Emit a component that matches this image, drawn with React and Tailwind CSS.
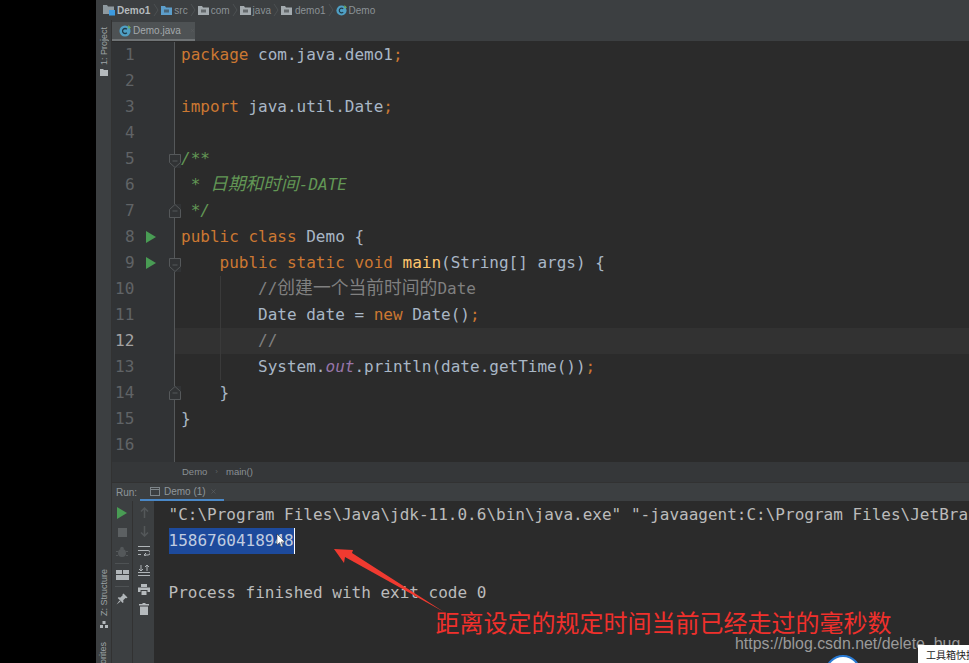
import React from "react";
import { X } from "lucide-react";

const mono = "font-['DejaVu_Sans_Mono','Noto_Sans_CJK_SC',monospace]";
const K = ({ children }) => <span className="text-[#cc7832]">{children}</span>;
const C = ({ children }) => <span className="text-[#629755] italic">{children}</span>;
const G = ({ children }) => <span className="text-[#808080]">{children}</span>;
const H = ({ children }) => <span className="text-[17.800px] leading-none">{children}</span>;

const lines = [
  [<><K>package</K> com.java.demo1<K>;</K></>],
  [""],
  [<><K>import</K> java.util.Date<K>;</K></>],
  [""],
  [<C>/**</C>, "down"],
  [<C>&nbsp;* <H>日期和时间</H>-DATE</C>],
  [<C>&nbsp;*/</C>, "up"],
  [<><K>public class</K> Demo {"{"}</>, null, true],
  [<>&nbsp;&nbsp;&nbsp;&nbsp;<K>public static void</K> <span className="text-[#ffc66d]">main</span>(String[] args) {"{"}</>, "down", true],
  [<>&nbsp;&nbsp;&nbsp;&nbsp;&nbsp;&nbsp;&nbsp;&nbsp;<G>//<H>创建一个当前时间的</H>Date</G></>],
  [<>&nbsp;&nbsp;&nbsp;&nbsp;&nbsp;&nbsp;&nbsp;&nbsp;Date date = <K>new</K> Date()<K>;</K></>],
  [<>&nbsp;&nbsp;&nbsp;&nbsp;&nbsp;&nbsp;&nbsp;&nbsp;<G>//</G></>],
  [<>&nbsp;&nbsp;&nbsp;&nbsp;&nbsp;&nbsp;&nbsp;&nbsp;System.<span className="text-[#9876aa] italic">out</span>.println(date.getTime())<K>;</K></>],
  [<>&nbsp;&nbsp;&nbsp;&nbsp;{"}"}</>, "up"],
  ["}"],
  [""],
];

function Fold({ dir }) {
  return (
    <svg width="12" height="14" viewBox="0 0 12 14" className={`absolute left-[57px] bg-[#313335] ${dir === "down" ? "top-[8px]" : "top-[6px]"}`} fill="none" stroke="#55585a">
      {dir === "down" ? <path d="M.5.5h11v8l-5.500 5-5.500-5z" /> : <path d="M.5 13.500h11v-8l-5.500-5-5.500 5z" />}
      <path d="M3.500 7h5" />
    </svg>
  );
}

const Sep = () => (
  <svg width="10" height="14" viewBox="0 0 10 14" fill="none" stroke="#4c5052" className="shrink-0"><path d="M3 1l4 6-4 6" /></svg>
);
const Folder = ({ c = "#a4abaf" }) => (
  <svg width="11" height="9" viewBox="0 0 11 9" className="shrink-0"><path d="M0 0h4l1 1.500h6V9H0z" fill={c} /><rect x="3" y="3.500" width="5" height="3" fill="#3c3f41" opacity=".6" /></svg>
);
const ClassIcon = ({ s = 13 }) => (
  <svg width={s} height={s} viewBox="0 0 13 13" className="shrink-0">
    <circle cx="6.500" cy="6.500" r="6" fill="#4f9fc4" />
    <path d="M8.500 4.600A2.700 2.700 0 1 0 8.500 8.400" stroke="#1f3a48" strokeWidth="1.400" fill="none" />
    <path d="M10 0l3 3-3 1z" fill="#6fae5a" />
  </svg>
);
const Crumb = ({ icon, children, gap = "gap-[2px]" }) => (
  <span className={`flex items-center ${gap}`}>
    {icon}
    <span className="text-[#8b9296]">{children}</span>
  </span>
);

const Row = ({ h = "h-[19.500px]", children }) => <div className={`${h} flex items-center justify-center shrink-0`}>{children}</div>;

export default function App() {
  return (
    <div className="relative flex w-[969px] h-[663px] overflow-hidden bg-black font-['Liberation_Sans','Noto_Sans_CJK_SC',sans-serif]">
      <div className="w-[96px] shrink-0 bg-black" />
      <div className="flex-1 flex flex-col min-w-0 bg-[#2b2b2b]">
        <div className="h-[20px] shrink-0 flex items-center pl-[7px] bg-[#3c3f41] text-[10px]">
          <span className="flex items-center gap-[1px]">
            <svg width="13" height="12" viewBox="0 0 13 12" className="shrink-0"><path d="M0 1h4l1 1.500h6V10H0z" fill="#8f9aa0" /><rect x="6" y="6" width="6" height="5.500" fill="#3d9be0" /></svg>
            <span className="font-bold text-[#b4babd]">Demo1</span>
          </span>
          <span className="w-[1px]" /><Sep />
          <Crumb icon={<Folder c="#5c9ecb" />}>src</Crumb>
          <Sep />
          <Crumb icon={<Folder />}>com</Crumb>
          <Sep />
          <Crumb icon={<Folder />}>java</Crumb>
          <Sep />
          <Crumb icon={<Folder />} gap="gap-[3px]">demo1</Crumb>
          <Sep />
          <Crumb icon={<ClassIcon s={11} />}>Demo</Crumb>
        </div>

        <div className="flex-1 flex min-h-0">
          <div className="w-[16px] shrink-0 bg-[#3c3f41] border-r border-[#323232] flex flex-col items-center pt-[7px] relative">
            <span className="[writing-mode:vertical-rl] rotate-180 text-[9px] leading-[12px] text-[#9ea3a6]">1: Project</span>
            <svg width="8" height="7" viewBox="0 0 8 7" className="mt-[4px]"><path d="M0 0h3l1 1h4v6H0z" fill="#b5babd" /></svg>
            <div className="absolute left-0 top-[549px] flex flex-col items-center w-[15px]">
              <span className="[writing-mode:vertical-rl] rotate-180 text-[9px] leading-[12px] text-[#9ea3a6]">Z: Structure</span>
              <svg width="8" height="7" viewBox="0 0 8 7" className="mt-[5px]"><path d="M0 4h3v3H0zM5 4h3v3H5zM2.500 0h3v3h-3z" fill="#b5babd" /></svg>
            </div>
            <span className="absolute top-[622px] left-[1px] [writing-mode:vertical-rl] rotate-180 text-[9px] leading-[12px] text-[#9ea3a6]">Favorites</span>
          </div>

          <div className="flex-1 flex flex-col min-w-0">
            <div className="h-[21px] shrink-0 flex items-end bg-[#3c3f41]">
              <div className="w-[83px] h-[19px] flex items-center pl-[7px] gap-[2px] bg-[#4e5254] border-b-[2px] border-[#6f7375] text-[10px] text-[#a4a9ac]">
                <ClassIcon s={12} />
                <span>Demo.java</span>
                <X size={7} className="ml-[7px] text-[#5f6365]" />
              </div>
            </div>

            <div className={`h-[421px] shrink-0 flex flex-col pt-[1px] text-[16px] leading-[26px] text-[#a9b7c6] ${mono}`}>
              {lines.map(([code, fold, run], i) => (
                <div key={i} className={`relative flex h-[26px] shrink-0 ${i === 11 ? "bg-[#323232]" : ""}`}>
                  <div className="relative w-[63px] shrink-0 h-full bg-[#313335] border-r border-[#55585a] text-right text-[#606366]">
                    <span className={`absolute top-0 ${i >= 9 ? "left-[3px]" : "left-[13px]"} ${i === 11 ? "text-[#a4a3a3]" : ""}`}>{i + 1}</span>
                    {run && (
                      <svg width="10" height="12" viewBox="0 0 10 12" className="absolute left-[34px] top-[7px]"><path d="M0 0l10 6-10 6z" fill="#499c54" /></svg>
                    )}
                    {fold && <Fold dir={fold} />}
                  </div>
                  <div className="pl-[6px] whitespace-pre">{code}</div>
                  {i >= 9 && i <= 12 && <div className="absolute left-[108px] top-0 bottom-0 w-px bg-[#3a3a3a]" />}
                </div>
              ))}
              <div className="flex-1 flex">
                <div className="w-[63px] shrink-0 bg-[#313335] border-r border-[#55585a]" />
              </div>
            </div>

            <div className="h-[20px] shrink-0 flex items-center pl-[70px] gap-[8px] bg-[#353739] text-[9.500px] text-[#8a9094]">
              <span>Demo</span>
              <span className="text-[#5c6062] text-[8px]">›</span>
              <span>main()</span>
            </div>

            <div className="h-[19px] shrink-0 flex items-end bg-[#3c3f41] border-t border-[#323232] text-[10px] text-[#8f969a]">
              <span className="self-center pl-[4px] w-[28px]">Run:</span>
              <div className="w-[84px] h-[18px] flex items-center pl-[10px] gap-[4px] border-b-[2px] border-[#4a88c7]">
                <svg width="10" height="9" viewBox="0 0 10 9" fill="none" stroke="#7e8589"><rect x=".5" y=".5" width="9" height="8" /><path d="M.5 2.500h9" /></svg>
                <span>Demo (1)</span>
                <X size={7} className="text-[#5f6365]" />
              </div>
            </div>

            <div className="flex-1 flex min-h-0">
              <div className="w-[21px] shrink-0 bg-[#3c3f41] border-r border-[#323232] flex flex-col pt-[2px]">
                <Row><svg width="10" height="12" viewBox="0 0 10 12"><path d="M0 0l10 6-10 6z" fill="#499c54" /></svg></Row>
                <Row><div className="w-[9px] h-[9px] bg-[#5c6062]" /></Row>
                <Row>
                  <svg width="12" height="12" viewBox="0 0 12 12" fill="#54585a"><circle cx="6" cy="7" r="4" /><circle cx="6" cy="2.500" r="1.800" /><path d="M0 5h2v1H0zM10 5h2v1h-2zM0 9h2v1H0zM10 9h2v1h-2z" /></svg>
                </Row>
                <div className="h-px mt-[1.500px] mx-[3px] bg-[#4e5254] shrink-0" />
                <Row h="h-[22px]"><svg width="13" height="10" viewBox="0 0 13 10" fill="#b0b5b8"><path d="M0 0h6v4H0zM7 0h6v4H7zM0 5h13v5H0z" /></svg></Row>
                <div className="h-px mx-[3px] bg-[#4e5254] shrink-0" />
                <Row h="h-[24px]">
                  <svg width="12" height="12" viewBox="0 0 12 12" fill="#b0b5b8">
                    <path d="M7.500 0.500l4 4-1 .7-1-.2-2.300 2.300.3 2-.8.7-5-5 .7-.8 2 .3 2.300-2.300-.2-1z" />
                    <path d="M3.500 7.500L0.500 11.500l4-3z" />
                  </svg>
                </Row>
              </div>
              <div className="w-[21px] shrink-0 bg-[#3c3f41] flex flex-col pt-[2px] pl-[1px]">
                <Row h="h-[19.200px]"><svg width="9" height="11" viewBox="0 0 9 11" fill="none" stroke="#54585a" strokeWidth="1.500"><path d="M4.500 11V1M1 4.500l3.500-3.500 3.500 3.500" /></svg></Row>
                <Row h="h-[19.200px]"><svg width="9" height="11" viewBox="0 0 9 11" fill="none" stroke="#54585a" strokeWidth="1.500"><path d="M4.500 0v10M1 6.500l3.500 3.500 3.500-3.500" /></svg></Row>
                <Row h="h-[19.200px]"><svg width="12" height="10" viewBox="0 0 12 10" fill="none" stroke="#b0b5b8"><path d="M0 .5h12M0 4.500h10a2 2 0 0 1 0 4.500H6.500M8 7l-2 2 2 1M0 8.500h3" /></svg></Row>
                <Row h="h-[19.200px]"><svg width="12" height="11" viewBox="0 0 12 11" fill="none" stroke="#b0b5b8"><path d="M0 10.500h12M0 7.500h12M3 0v6M1 4l2 2 2-2M9 6V0M7 2l2-2 2 2" /></svg></Row>
                <Row h="h-[19.200px]"><svg width="12" height="11" viewBox="0 0 12 11" fill="#b5babd"><path d="M3 0h6v3H3zM0 3.500h12V8H9.500V6h-7v2H0zM3.500 7h5v4h-5z" /></svg></Row>
                <Row h="h-[19.200px]"><svg width="10" height="12" viewBox="0 0 10 12" fill="#b5babd"><path d="M0 1h3.500V0h3v1H10v1.500H0zM1 3.500h8V12H1z" /></svg></Row>
              </div>
              <div className={`pl-[14.500px] pt-[1px] flex-1 min-w-0 overflow-hidden bg-[#2b2b2b] text-[16px] leading-[26px] text-[#bbbbbb] whitespace-pre ${mono}`}>
                <div>"C:\Program Files\Java\jdk-11.0.6\bin\java.exe" "-javaagent:C:\Program Files\JetBrains</div>
                <div className="h-[26px]">
                  <span className="inline-block bg-[#1d4a9c] border-r border-white leading-[26px] text-[#c0cce0]">1586760418948</span>
                </div>
                <div className="h-[26px]" />
                <div>Process finished with exit code 0</div>
              </div>
            </div>
          </div>
        </div>
      </div>

      <svg className="absolute left-[276px] top-[534px] pointer-events-none" width="10" height="14" viewBox="0 0 10 14">
        <path d="M1 0v11l2.500-2.500L5.500 13l1.500-.7L5 8h4z" fill="#fff" stroke="#2b2b2b" strokeWidth=".5" />
      </svg>
      <svg className="absolute left-[330px] top-[544px] pointer-events-none" width="120" height="80" viewBox="0 0 120 80">
        <path d="M4 5 L23 6 L22 9 L114 68 L15 13 L14 19 Z" fill="#f03a30" />
      </svg>
      <span className="absolute left-[435.500px] top-[606px] text-[24px] leading-[32px] text-[#f0302c] whitespace-nowrap font-['Noto_Sans_CJK_SC',sans-serif]">距离设定的规定时间当前已经走过的毫秒数</span>
      <span className="absolute left-[735px] top-[633px] text-[15.900px] leading-[22px] text-[#9a9a9a] whitespace-nowrap">https://blog.csdn.net/delete_bug</span>
      <div className="absolute left-[825px] top-[655px] w-[36px] h-[36px] rounded-full bg-white border-[2px] border-[#2a7bd4]" />
      <div className="absolute left-[918px] top-[645px] w-[51px] h-[18px] overflow-hidden bg-white text-[10px] leading-[20px] pl-[8px] text-[#222] whitespace-nowrap font-['Noto_Sans_CJK_SC',sans-serif]">工具箱快捷</div>
    </div>
  );
}
